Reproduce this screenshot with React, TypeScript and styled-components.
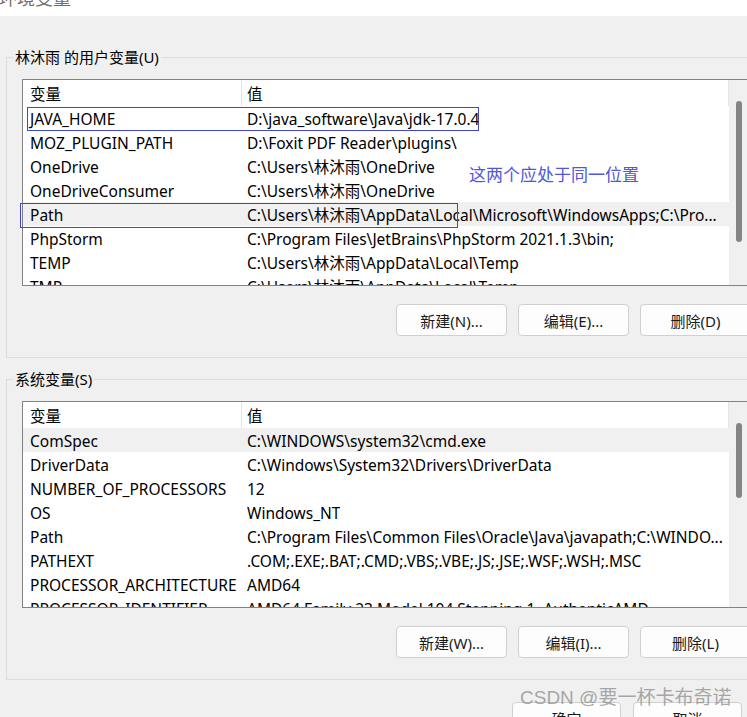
import React from 'react'
import styled, { createGlobalStyle } from 'styled-components'

const FONT = `"Microsoft YaHei UI", "Noto Sans", "Noto Sans CJK SC", sans-serif`

const GlobalStyle = createGlobalStyle`
  html, body {
    margin: 0;
    padding: 0;
    background: #f0f0f0;
  }
  body {
    font-family: ${FONT};
    font-size: 15.5px;
    color: #000;
  }
`

interface IVar {
  name: string;
  value: string;
  selected?: boolean;
}

const USER_VARS: IVar[] = [
  { name: "JAVA_HOME", value: "D:\\java_software\\Java\\jdk-17.0.4" },
  { name: "MOZ_PLUGIN_PATH", value: "D:\\Foxit PDF Reader\\plugins\\" },
  { name: "OneDrive", value: "C:\\Users\\林沐雨\\OneDrive" },
  { name: "OneDriveConsumer", value: "C:\\Users\\林沐雨\\OneDrive" },
  { name: "Path", value: "C:\\Users\\林沐雨\\AppData\\Local\\Microsoft\\WindowsApps;C:\\Pro...", selected: true },
  { name: "PhpStorm", value: "C:\\Program Files\\JetBrains\\PhpStorm 2021.1.3\\bin;" },
  { name: "TEMP", value: "C:\\Users\\林沐雨\\AppData\\Local\\Temp" },
  { name: "TMP", value: "C:\\Users\\林沐雨\\AppData\\Local\\Temp" },
];

const SYSTEM_VARS: IVar[] = [
  { name: "ComSpec", value: "C:\\WINDOWS\\system32\\cmd.exe", selected: true },
  { name: "DriverData", value: "C:\\Windows\\System32\\Drivers\\DriverData" },
  { name: "NUMBER_OF_PROCESSORS", value: "12" },
  { name: "OS", value: "Windows_NT" },
  { name: "Path", value: "C:\\Program Files\\Common Files\\Oracle\\Java\\javapath;C:\\WINDO..." },
  { name: "PATHEXT", value: ".COM;.EXE;.BAT;.CMD;.VBS;.VBE;.JS;.JSE;.WSF;.WSH;.MSC" },
  { name: "PROCESSOR_ARCHITECTURE", value: "AMD64" },
  { name: "PROCESSOR_IDENTIFIER", value: "AMD64 Family 23 Model 104 Stepping 1, AuthenticAMD" },
];

const Page = styled.div`
  position: relative;
  width: 747px;
  height: 717px;
  overflow: hidden;
  background: #f0f0f0;
`

const TitleBar = styled.div`
  height: 16px;
  background: #fff;
  overflow: hidden;
  > span {
    display: block;
    margin-top: -14px;
    margin-left: -1px;
    font-size: 18px;
    line-height: 24px;
    color: #6e6e6e;
  }
`

const Body = styled.div`
  padding: 31px 0 0 6px;
  width: 760px;
`

const Group = styled.fieldset<{ $gap?: number }>`
  margin: ${(p) => p.$gap ?? 0}px 0 0 0;
  padding: 0 14px 21px 15px;
  width: 760px;
  box-sizing: border-box;
  border: 1px solid #dcdcdc;
  min-width: 0;

  > legend {
    margin-left: -9px;
    padding: 0 2px;
    font-size: 15px;
    line-height: 20px;
  }
`

const ListBox = styled.div`
  margin-top: 12px;
  width: 726px;
  height: 207px;
  box-sizing: border-box;
  border: 1px solid #828282;
  background: #fff;
  display: flex;
  overflow: hidden;
`

const ListContent = styled.div`
  width: 706px;
  flex: none;
  overflow: hidden;
`

const Row = styled.div<{ $header?: boolean; $selected?: boolean }>`
  display: grid;
  grid-template-columns: 219px 1fr;
  height: ${(p) => (p.$header ? 26 : 24)}px;
  align-items: center;
  background: ${(p) => (p.$selected ? "#f0f0f0" : "#fff")};
  white-space: nowrap;
`

const NameCell = styled.div<{ $header?: boolean }>`
  padding: 1px 0 0 7px;
  box-sizing: border-box;
  height: 100%;
  display: flex;
  align-items: center;
  overflow: hidden;
  border-right: ${(p) => (p.$header ? "1px solid #e5e5e5" : "1px solid transparent")};
`

const ValueCell = styled.div<{ $header?: boolean }>`
  padding: 1px 6px 0 5px;
  box-sizing: border-box;
  height: 100%;
  display: flex;
  align-items: center;
  overflow: hidden;
  border-right: ${(p) => (p.$header ? "1px solid #e5e5e5" : "none")};

  > span {
    overflow: hidden;
    text-overflow: ellipsis;
  }
`

const ScrollTrack = styled.div`
  width: 18px;
  flex: none;
  background: #f0f0f0;
  position: relative;
`

const ScrollThumb = styled.div<{ $top: number; $height: number }>`
  position: absolute;
  left: 7px;
  top: ${(p) => p.$top}px;
  width: 6px;
  height: ${(p) => p.$height}px;
  background: #858585;
  border-radius: 3px;
`

const ButtonRow = styled.div`
  display: flex;
  justify-content: flex-end;
  gap: 11px;
  margin-top: 18px;
`

const Button = styled.button<{ $w?: number }>`
  width: ${(p) => p.$w ?? 111}px;
  height: 32px;
  box-sizing: border-box;
  background: #fdfdfd;
  border: 1px solid #d0d0d0;
  border-radius: 4px;
  font-family: ${FONT};
  font-size: 15px;
  color: #1a1a1a;
  padding: 0;
`

const Footer = styled.div`
  display: flex;
  justify-content: flex-end;
  gap: 12px;
  margin-top: 22px;
  padding-right: 5px;
`

const Mark = styled.div<{ $x: number; $y: number; $w: number; $h: number }>`
  position: absolute;
  left: ${(p) => p.$x}px;
  top: ${(p) => p.$y}px;
  width: ${(p) => p.$w}px;
  height: ${(p) => p.$h}px;
  box-sizing: border-box;
  border: 1px solid #3f48cc;
  pointer-events: none;
`

const Note = styled.div`
  position: absolute;
  left: 469px;
  top: 163px;
  font-size: 17px;
  line-height: 24px;
  color: #4f58d8;
  white-space: nowrap;
`

const Watermark = styled.div`
  position: absolute;
  left: 520px;
  top: 685px;
  font-family: "Liberation Sans", "Noto Sans CJK SC", sans-serif;
  font-size: 19px;
  line-height: 26px;
  color: rgba(140, 140, 140, 0.75);
  white-space: nowrap;
`

const VarList = ({ vars, thumbHeight }: { vars: IVar[]; thumbHeight: number }) => {
  return (
    <ListBox>
      <ListContent>
        <Row $header>
          <NameCell $header>变量</NameCell>
          <ValueCell $header><span>值</span></ValueCell>
        </Row>
        {vars.map((v) => (
          <Row key={v.name} $selected={v.selected}>
            <NameCell>{v.name}</NameCell>
            <ValueCell><span>{v.value}</span></ValueCell>
          </Row>
        ))}
      </ListContent>
      <ScrollTrack>
        <ScrollThumb $top={21} $height={thumbHeight} />
      </ScrollTrack>
    </ListBox>
  )
}

export default function App() {
  return (
    <Page>
      <GlobalStyle />
      <TitleBar><span>环境变量</span></TitleBar>
      <Body>
        <Group>
          <legend>林沐雨 的用户变量(U)</legend>
          <VarList vars={USER_VARS} thumbHeight={141} />
          <ButtonRow>
            <Button>新建(N)...</Button>
            <Button>编辑(E)...</Button>
            <Button>删除(D)</Button>
          </ButtonRow>
        </Group>
        <Group $gap={11}>
          <legend>系统变量(S)</legend>
          <VarList vars={SYSTEM_VARS} thumbHeight={75} />
          <ButtonRow>
            <Button>新建(W)...</Button>
            <Button>编辑(I)...</Button>
            <Button>删除(L)</Button>
          </ButtonRow>
        </Group>
      </Body>
      <Footer>
        <Button $w={109}>确定</Button>
        <Button $w={109}>取消</Button>
      </Footer>
      <Mark $x={27} $y={107} $w={452} $h={24} />
      <Mark $x={20} $y={203} $w={438} $h={25} />
      <Note>这两个应处于同一位置</Note>
      <Watermark>CSDN @要一杯卡布奇诺</Watermark>
    </Page>
  )
}
